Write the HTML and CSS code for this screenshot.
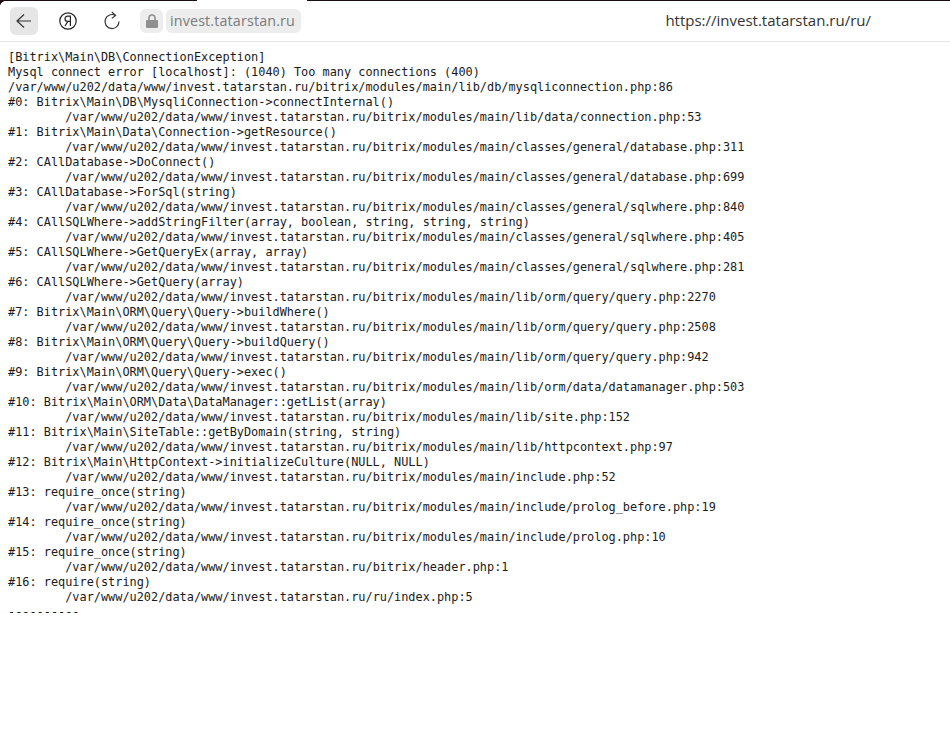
FILE: index.html
```html
<!DOCTYPE html>
<html lang="ru">
<head>
<meta charset="utf-8">
<title>invest.tatarstan.ru</title>
<link rel="stylesheet" href="styles.css">
</head>
<body>
<div class="topline"><span class="topline-left"></span><span class="topline-right"></span></div>
<header class="toolbar">
  <button class="back" aria-label="Назад">
    <svg width="20" height="20" viewBox="0 0 20 20" fill="none" stroke="#333" stroke-width="1.2"><path d="M17 10H3M10 3.500 3 10l7 6.500"/></svg>
  </button>
  <span class="ya" aria-label="Яндекс">
    <svg width="20" height="20" viewBox="0 0 20 20" fill="none" stroke="#222" stroke-width="1.2"><circle cx="10" cy="10" r="8.200"/><path d="M12.400 15V5.200H9.800C8 5.200 7 6.300 7 7.800s1 2.600 2.800 2.600h2.600M9.800 10.400 7 15"/></svg>
  </span>
  <span class="reload" aria-label="Обновить">
    <svg width="20" height="20" viewBox="0 0 20 20" fill="none" stroke="#333" stroke-width="1.2"><path d="M13.400 4.400A7 7 0 1 0 17 10.500M9.800 1l3.800 3.400-3.800 3"/></svg>
  </span>
  <span class="lock">
    <svg width="12" height="14" viewBox="0 0 12 14"><path fill="#8f8f8f" d="M1 6h10a1 1 0 0 1 1 1v6a1 1 0 0 1-1 1H1a1 1 0 0 1-1-1V7a1 1 0 0 1 1-1z"/><path fill="none" stroke="#8f8f8f" stroke-width="1.600" d="M3 6.500V4a3 3 0 0 1 6 0v2.500"/></svg>
  </span>
  <span class="domain">invest.tatarstan.ru</span>
  <span class="url">https://invest.tatarstan.ru/ru/</span>
</header>
<pre class="trace">[Bitrix\Main\DB\ConnectionException] 
Mysql connect error [localhost]: (1040) Too many connections (400)
/var/www/u202/data/www/invest.tatarstan.ru/bitrix/modules/main/lib/db/mysqliconnection.php:86
#0: Bitrix\Main\DB\MysqliConnection-&gt;connectInternal()
	/var/www/u202/data/www/invest.tatarstan.ru/bitrix/modules/main/lib/data/connection.php:53
#1: Bitrix\Main\Data\Connection-&gt;getResource()
	/var/www/u202/data/www/invest.tatarstan.ru/bitrix/modules/main/classes/general/database.php:311
#2: CAllDatabase-&gt;DoConnect()
	/var/www/u202/data/www/invest.tatarstan.ru/bitrix/modules/main/classes/general/database.php:699
#3: CAllDatabase-&gt;ForSql(string)
	/var/www/u202/data/www/invest.tatarstan.ru/bitrix/modules/main/classes/general/sqlwhere.php:840
#4: CAllSQLWhere-&gt;addStringFilter(array, boolean, string, string, string)
	/var/www/u202/data/www/invest.tatarstan.ru/bitrix/modules/main/classes/general/sqlwhere.php:405
#5: CAllSQLWhere-&gt;GetQueryEx(array, array)
	/var/www/u202/data/www/invest.tatarstan.ru/bitrix/modules/main/classes/general/sqlwhere.php:281
#6: CAllSQLWhere-&gt;GetQuery(array)
	/var/www/u202/data/www/invest.tatarstan.ru/bitrix/modules/main/lib/orm/query/query.php:2270
#7: Bitrix\Main\ORM\Query\Query-&gt;buildWhere()
	/var/www/u202/data/www/invest.tatarstan.ru/bitrix/modules/main/lib/orm/query/query.php:2508
#8: Bitrix\Main\ORM\Query\Query-&gt;buildQuery()
	/var/www/u202/data/www/invest.tatarstan.ru/bitrix/modules/main/lib/orm/query/query.php:942
#9: Bitrix\Main\ORM\Query\Query-&gt;exec()
	/var/www/u202/data/www/invest.tatarstan.ru/bitrix/modules/main/lib/orm/data/datamanager.php:503
#10: Bitrix\Main\ORM\Data\DataManager::getList(array)
	/var/www/u202/data/www/invest.tatarstan.ru/bitrix/modules/main/lib/site.php:152
#11: Bitrix\Main\SiteTable::getByDomain(string, string)
	/var/www/u202/data/www/invest.tatarstan.ru/bitrix/modules/main/lib/httpcontext.php:97
#12: Bitrix\Main\HttpContext-&gt;initializeCulture(NULL, NULL)
	/var/www/u202/data/www/invest.tatarstan.ru/bitrix/modules/main/include.php:52
#13: require_once(string)
	/var/www/u202/data/www/invest.tatarstan.ru/bitrix/modules/main/include/prolog_before.php:19
#14: require_once(string)
	/var/www/u202/data/www/invest.tatarstan.ru/bitrix/modules/main/include/prolog.php:10
#15: require_once(string)
	/var/www/u202/data/www/invest.tatarstan.ru/bitrix/header.php:1
#16: require(string)
	/var/www/u202/data/www/invest.tatarstan.ru/ru/index.php:5
----------</pre>
</body>
</html>
```
FILE: styles.css
```css
html, body { margin: 0; padding: 0; background: #fff; }
body { width: 950px; height: 745px; overflow: hidden; }
.topline { height: 1px; display: flex; justify-content: space-between; position: relative; }
.topline-left { width: 197px; background: #1c0f14; }
.topline-left::after {
  content: "";
  position: absolute;
  left: 0;
  top: 1px;
  width: 5px;
  height: 5px;
  background: radial-gradient(circle at 100% 100%, #fff 0, #fff 4.500px, #1c0f14 5px);
}
.topline-right { width: 643px; background: #1c0f14; }
.toolbar {
  height: 40px;
  border-bottom: 1px solid #e3e3e3;
  display: flex;
  align-items: center;
  padding-left: 10px;
  font-family: "Open Sans", "Noto Sans", sans-serif;
}
.back {
  width: 28px; height: 28px; margin: 0; padding: 0; border: 0; border-radius: 6px;
  background: #e6e6e6; display: flex; align-items: center; justify-content: center;
}
.ya { width: 20px; height: 20px; margin-left: 20px; display: flex; }
.reload { width: 20px; height: 20px; margin-left: 24px; display: flex; }
.lock {
  width: 23px; height: 24px; margin-left: 18px; border-radius: 6px; background: #ededed;
  display: flex; align-items: center; justify-content: center;
}
.domain {
  margin-left: 3px; height: 24px; line-height: 24px; padding: 0 6px 0 4px; border-radius: 6px;
  background: #ededed; color: #7b7b7b; font-size: 14.300px; letter-spacing: .15px; white-space: nowrap;
}
.url { margin-left: auto; margin-right: 79px; margin-bottom: 2px; color: #333; font-size: 15px; white-space: nowrap; }
.trace {
  margin: 8px 0 0 8px;
  font-family: "DejaVu Sans Mono", monospace;
  font-size: 11.880px;
  line-height: 15px;
  color: #1a1a1a;
  tab-size: 8;
  white-space: pre;
}
```
